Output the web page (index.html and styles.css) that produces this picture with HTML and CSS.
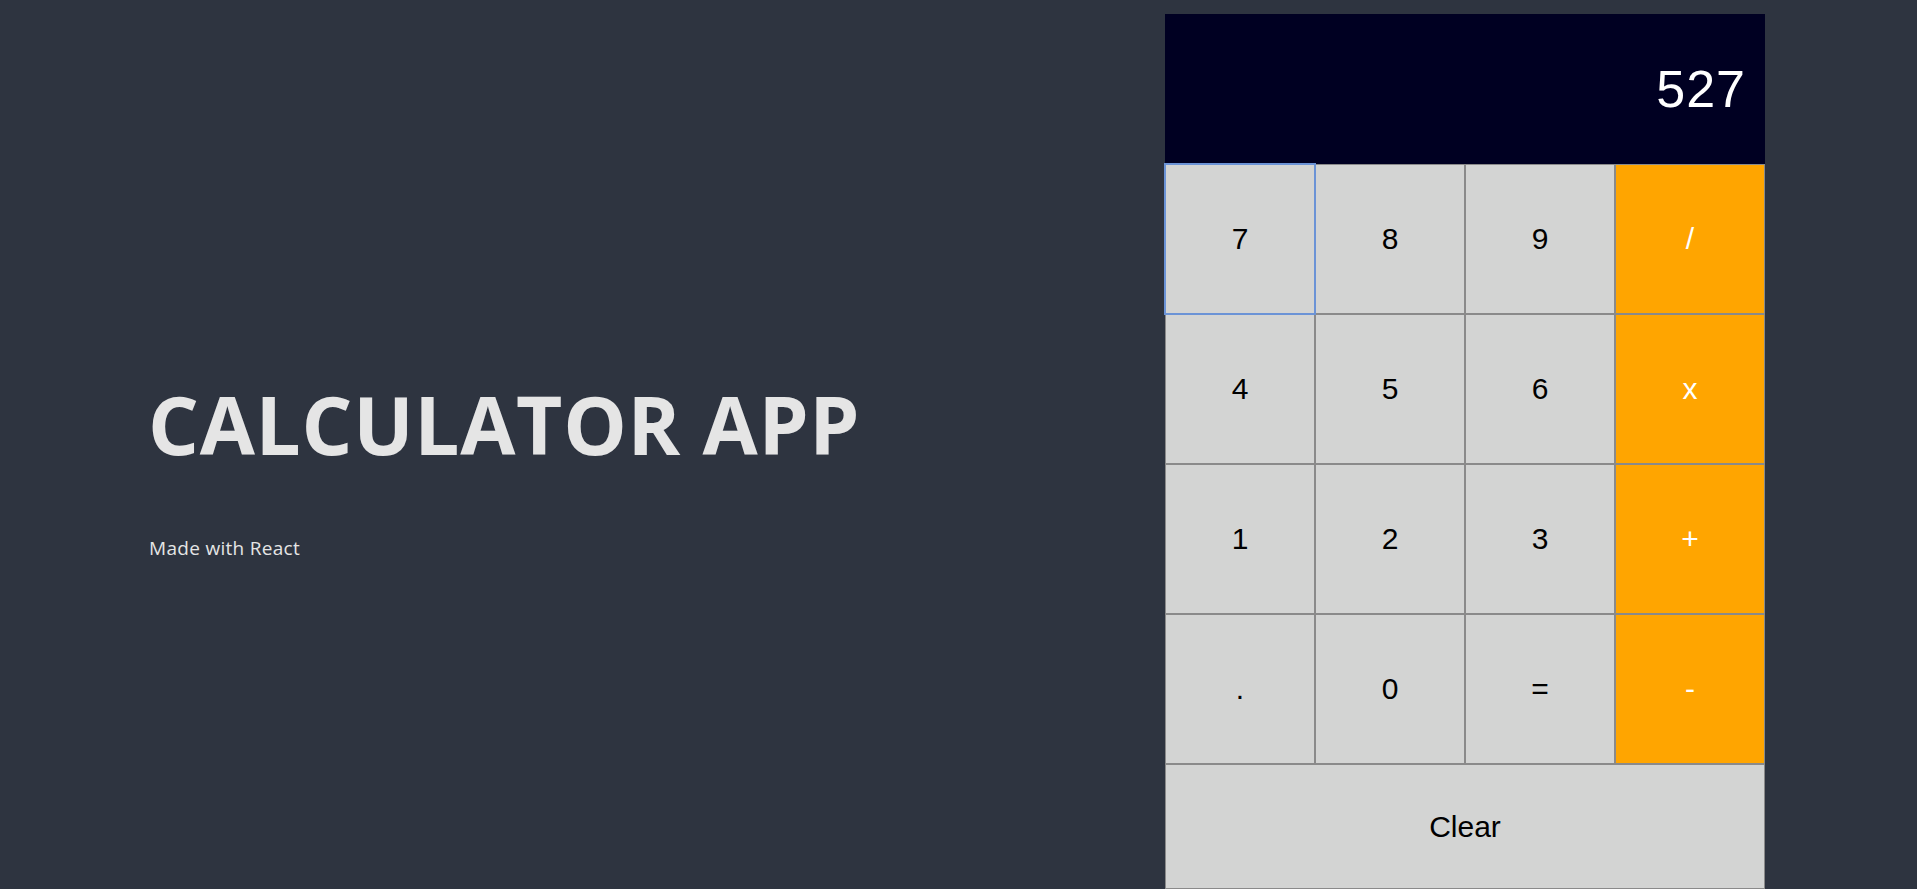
FILE: index.html
```html
<!DOCTYPE html>
<html lang="en">
<head>
<meta charset="utf-8">
<title>Calculator App</title>
<link rel="stylesheet" href="styles.css">
</head>
<body>
<main class="page">
  <section class="intro">
    <h1 class="title">CALCULATOR APP</h1>
    <p class="subtitle">Made with React</p>
  </section>
  <section class="calculator">
    <div class="display">527</div>
    <div class="keys">
      <button class="key key-focus">7</button>
      <button class="key">8</button>
      <button class="key">9</button>
      <button class="key key-op">/</button>
      <button class="key">4</button>
      <button class="key">5</button>
      <button class="key">6</button>
      <button class="key key-op">x</button>
      <button class="key">1</button>
      <button class="key">2</button>
      <button class="key">3</button>
      <button class="key key-op">+</button>
      <button class="key">.</button>
      <button class="key">0</button>
      <button class="key">=</button>
      <button class="key key-op">-</button>
      <button class="key key-clear">Clear</button>
    </div>
  </section>
</main>
</body>
</html>
```

FILE: styles.css
```css
html, body {
  margin: 0;
  padding: 0;
}

body {
  background: #2e3440;
  height: 889px;
  overflow: hidden;
  font-family: "Open Sans", "Liberation Sans", sans-serif;
}

.page {
  display: flex;
  justify-content: space-between;
  align-items: flex-start;
  padding: 14px 152px 0 148px;
}

.intro {
  padding-top: 370px;
}

.title {
  margin: 0;
  font-family: "Open Sans", sans-serif;
  font-weight: 700;
  font-size: 80px;
  line-height: 80px;
  color: #e5e5e5;
  letter-spacing: 0.7px;
}

.subtitle {
  margin: 75px 0 0 1px;
  font-family: "Open Sans", sans-serif;
  font-size: 19px;
  line-height: 18px;
  letter-spacing: 0.3px;
  color: #e5e5e5;
}

.calculator {
  width: 600px;
  display: flex;
  flex-direction: column;
}

.display {
  height: 150px;
  background: #000022;
  color: #ffffff;
  font-family: "Liberation Sans", Arial, sans-serif;
  font-size: 52px;
  display: flex;
  align-items: center;
  justify-content: flex-end;
  padding-right: 19px;
  box-sizing: border-box;
  letter-spacing: 1px;
}

.keys {
  display: grid;
  grid-template-columns: repeat(4, 150px);
  grid-auto-rows: 150px;
}

.key {
  box-sizing: border-box;
  margin: 0;
  padding: 0;
  border: 1px solid #8a8a8a;
  background: #d3d4d3;
  color: #000000;
  font-family: "Liberation Sans", Arial, sans-serif;
  font-size: 30px;
  cursor: pointer;
}

.key-focus {
  border-color: #6b93d6;
  outline: 1px solid #6b93d6;
  outline-offset: 0;
  position: relative;
  z-index: 1;
}

.key-op {
  background: #ffa500;
  color: #ffffff;
}

.key-clear {
  grid-column: 1 / -1;
  height: 125px;
}
```
